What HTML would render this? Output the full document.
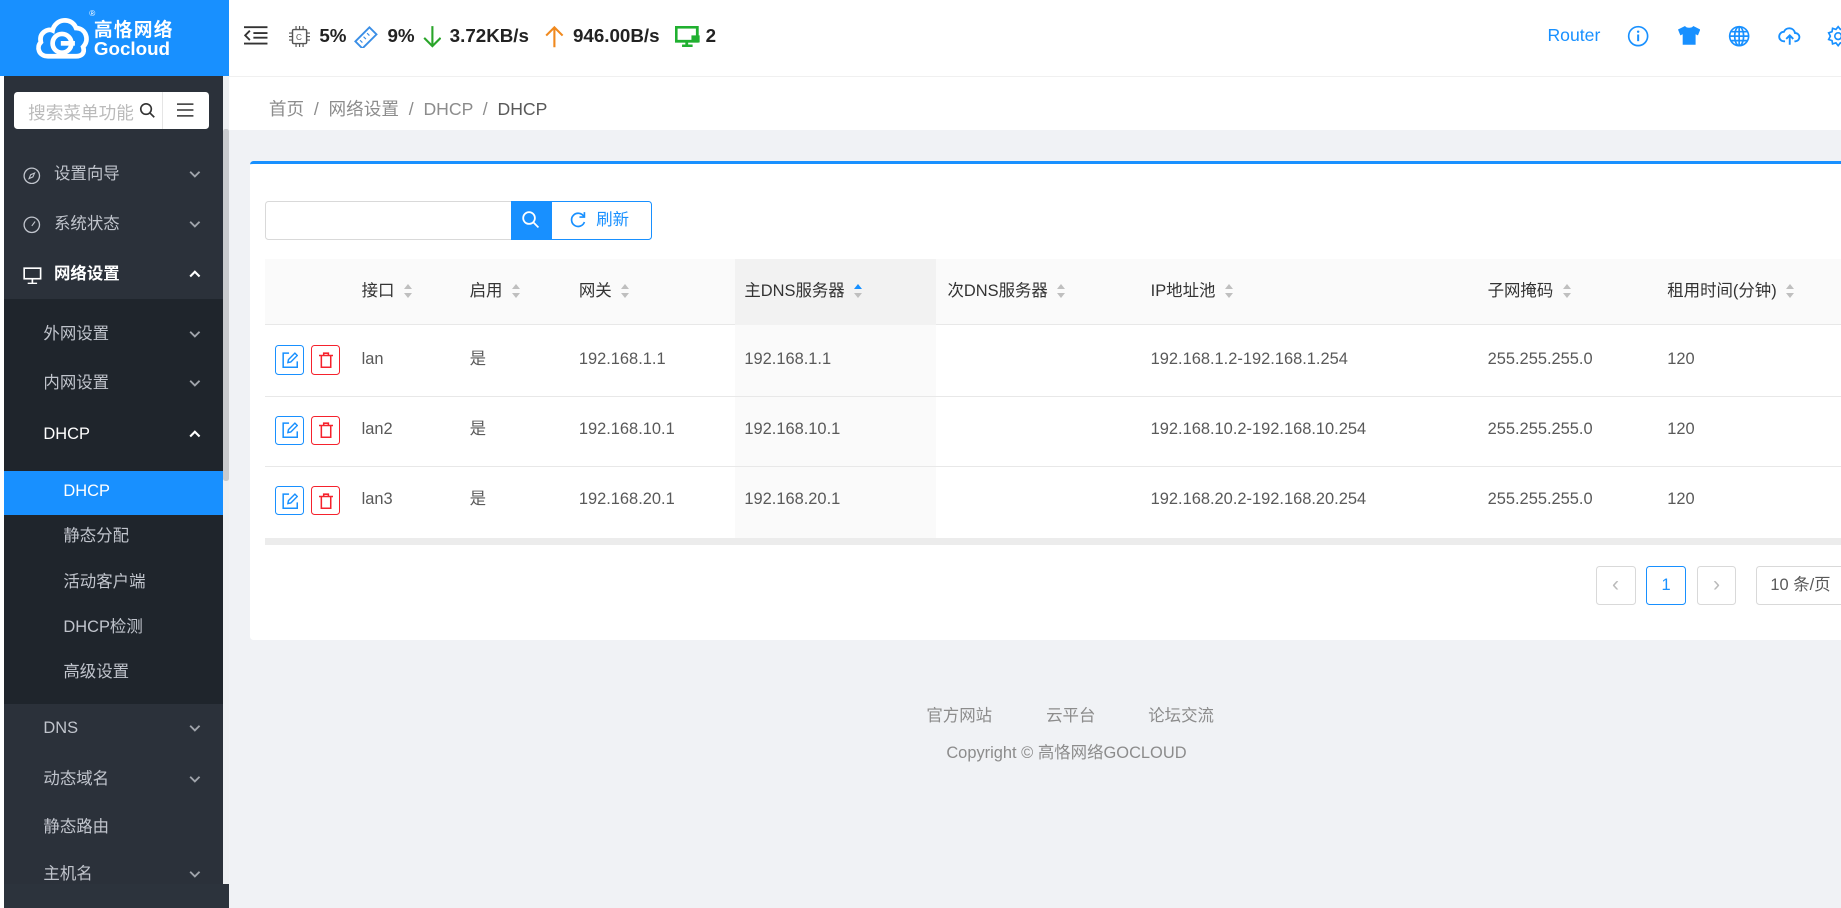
<!DOCTYPE html>
<html><head><meta charset="utf-8">
<style>
html{zoom:1.17411}
*{box-sizing:border-box;margin:0;padding:0}
body{width:1568px;height:773px;overflow:hidden;background:#f0f2f5;font-family:"Liberation Sans","Noto Sans CJK SC",sans-serif;font-size:14px;color:#595959;position:relative}
.abs{position:absolute;white-space:nowrap}
.hdr{left:0;top:0;width:1568px;height:65px;background:#fff;box-shadow:0 1px 3px rgba(0,0,0,.06)}
.logo{left:0;top:0;width:195px;height:65px;background:#1890ff}
.side{left:3px;top:65px;width:187px;height:708px;background:#2b313a}
.sb{left:190px;top:65px;width:5px;height:708px;background:#eef0f2}
.mi{position:absolute;left:0;width:187px;height:42px;line-height:42px;font-size:14px;color:#c0c4cc;white-space:nowrap}
.mi .ch{position:absolute;right:19px;top:17px;width:10px;height:7px}
.sub{left:3px;top:255px;width:187px;height:345px;background:#1f252c}
.card{left:213px;top:137px;width:1360px;height:408px;background:#fff;border-top:3px solid #1890ff;border-radius:3px}
.th{position:absolute;top:0;height:56px;line-height:56px;color:#333;font-size:14px;white-space:nowrap}
.srt{display:inline-block;vertical-align:middle;margin-left:8px;width:8px;height:14px;position:relative;top:-1px}
.srt:before,.srt:after{content:"";position:absolute;left:0;border-left:4px solid transparent;border-right:4px solid transparent}
.srt:before{top:1px;border-bottom:5px solid #bfbfbf}
.srt:after{bottom:1px;border-top:5px solid #bfbfbf}
.srt.up:before{border-bottom-color:#1890ff}
.td{position:absolute;top:0;height:20px;line-height:20px;font-size:14px;color:#595959;white-space:nowrap}
.btn{position:absolute;width:25px;height:25px;border-radius:3px;border:1px solid}
.pg{position:absolute;top:482px;width:34px;height:33px;border:1px solid #d9d9d9;border-radius:3px;text-align:center;line-height:31px;color:#bbb;background:#fff;white-space:nowrap}
</style></head><body>
<svg width="0" height="0" style="position:absolute"><defs>
<symbol id="dn" viewBox="0 0 10 7"><path d="M1 1.5l4 4 4-4" fill="none" stroke="#a0a4ab" stroke-width="1.6"/></symbol>
<symbol id="up" viewBox="0 0 10 7"><path d="M1 5.5l4-4 4 4" fill="none" stroke="#fff" stroke-width="1.8"/></symbol>
</defs></svg>
<div class="abs hdr"></div>
<div class="abs logo">
<svg class="abs" style="left:30px;top:12px" width="48" height="40" viewBox="0 0 46 40"><path d="M10 36 C2 36 0 28 4 24 C2 16 10 12 14 14 C16 4 30 2 34 12 C42 12 46 22 40 28 C42 34 38 36 34 36 Z" fill="none" stroke="#fff" stroke-width="4"/><circle cx="22" cy="25" r="8" fill="none" stroke="#fff" stroke-width="4"/><rect x="21" y="23" width="12" height="4" fill="#fff"/></svg>
<div class="abs" style="left:80px;top:13px;color:#fff;font-weight:bold;font-size:16px;letter-spacing:1px">高恪网络</div>
<div class="abs" style="left:80px;top:32px;color:#fff;font-weight:bold;font-size:16px">Gocloud</div>
<div class="abs" style="left:76px;top:8px;color:#fff;font-size:7px">®</div>
</div>
<svg class="abs" style="left:208px;top:22px" width="20" height="16" viewBox="0 0 20 16"><path d="M0 1h20M8 6h12M8 10h12M0 15h20M5 4L1 8l4 4" stroke="#333" stroke-width="1.6" fill="none"/></svg>
<svg class="abs" style="left:246px;top:22px" width="18" height="18" viewBox="0 0 18 18"><rect x="3" y="3" width="12" height="12" rx="1" fill="none" stroke="#555" stroke-width="1.2"/><path d="M6 0v3M9 0v3M12 0v3M6 15v3M9 15v3M12 15v3M0 6h3M0 9h3M0 12h3M15 6h3M15 9h3M15 12h3" stroke="#555"/><text x="6" y="12" font-size="7" fill="#555" font-family="Liberation Sans">C</text></svg>
<div class="abs" style="left:272px;top:21px;font-weight:bold;font-size:16px;color:#222">5%</div>
<svg class="abs" style="left:301px;top:21px" width="22" height="20" viewBox="0 0 22 20"><path d="M2 14L14 2l6 6L8 20z" fill="none" stroke="#3a8ee6" stroke-width="1.6"/><path d="M6 13l2 2M9 10l2 2M12 7l2 2" stroke="#3a8ee6"/></svg>
<div class="abs" style="left:330px;top:21px;font-weight:bold;font-size:16px;color:#222">9%</div>
<svg class="abs" style="left:360px;top:21px" width="16" height="20" viewBox="0 0 16 20"><path d="M8 1v17M1 11l7 7 7-7" stroke="#2aa52a" stroke-width="1.8" fill="none"/></svg>
<div class="abs" style="left:383px;top:21px;font-weight:bold;font-size:16px;color:#222">3.72KB/s</div>
<svg class="abs" style="left:464px;top:21px" width="16" height="20" viewBox="0 0 16 20"><path d="M8 19V2M1 9l7-7 7 7" stroke="#f0891e" stroke-width="1.8" fill="none"/></svg>
<div class="abs" style="left:488px;top:21px;font-weight:bold;font-size:16px;color:#222">946.00B/s</div>
<svg class="abs" style="left:575px;top:22px" width="22" height="18" viewBox="0 0 22 18"><rect x="1" y="1" width="18" height="12" fill="none" stroke="#20b030" stroke-width="2.4"/><path d="M6 17h9M10 13v4" stroke="#20b030" stroke-width="2.4"/><rect x="14" y="8" width="7" height="6" fill="#20b030"/></svg>
<div class="abs" style="left:601px;top:21px;font-weight:bold;font-size:16px;color:#222">2</div>
<div class="abs" style="left:1318px;top:21px;color:#1890ff;font-size:15px">Router</div>
<svg class="abs" style="left:1386px;top:21px" width="19" height="19" viewBox="0 0 20 20"><circle cx="10" cy="10" r="8.5" fill="none" stroke="#1890ff" stroke-width="1.5"/><path d="M10 8.5v6" stroke="#1890ff" stroke-width="1.8"/><circle cx="10" cy="6" r="1.1" fill="#1890ff"/></svg>
<svg class="abs" style="left:1429px;top:22px" width="19" height="16" viewBox="0 0 19 16"><path d="M6 0L0 3l2 5 2-1v9h11V7l2 1 2-5-6-3c-1 2-6 2-7 0z" fill="#1890ff"/></svg>
<svg class="abs" style="left:1472px;top:21px" width="19" height="19" viewBox="0 0 20 20"><g fill="none" stroke="#1890ff" stroke-width="1.5"><circle cx="10" cy="10" r="8.5"/><ellipse cx="10" cy="10" rx="4" ry="8.5"/><path d="M1.5 10h17M3 6h14M3 14h14M10 1.5v17"/></g></svg>
<svg class="abs" style="left:1514px;top:22px" width="20" height="17" viewBox="0 0 20 17"><path d="M6 13H5a4 4 0 010-8 5 5 0 019.5 1A3.5 3.5 0 0115 13h-1" fill="none" stroke="#1890ff" stroke-width="1.6"/><path d="M10 16V8M7 11l3-3 3 3" fill="none" stroke="#1890ff" stroke-width="1.6"/></svg>
<svg class="abs" style="left:1556px;top:21px" width="19" height="19" viewBox="0 0 20 20"><circle cx="10" cy="10" r="3" fill="none" stroke="#1890ff" stroke-width="1.5"/><path d="M10 1.5l2 2.5 3-1 .5 3 3 1-1.5 3 1.5 3-3 1-.5 3-3-1-2 2.5-2-2.5-3 1-.5-3-3-1 1.5-3-1.5-3 3-1 .5-3 3 1z" fill="none" stroke="#1890ff" stroke-width="1.5"/></svg>
<div class="abs" style="left:195px;top:65px;width:1373px;height:46px;background:#fff;border-top:1px solid #f0f0f0"></div>
<div class="abs" style="left:229px;top:82px;font-size:15px;color:#8c8c8c">首页 &nbsp;/&nbsp; 网络设置 &nbsp;/&nbsp; DHCP &nbsp;/&nbsp; <span style="color:#595959">DHCP</span></div>
<div class="abs" style="left:0;top:65px;width:3px;height:708px;background:#fff"></div>
<div class="abs side"></div>
<div class="abs sb"><div style="position:absolute;left:0;top:45px;width:5px;height:300px;background:#c9cbce;border-radius:2px"></div></div>
<div class="abs" style="left:12px;top:78px;width:166px;height:32px;background:#fff;border-radius:3px">
<span class="abs" style="left:12px;top:7px;color:#bbb;font-size:15px">搜索菜单功能</span>
<svg class="abs" style="left:106px;top:9px" width="14" height="14" viewBox="0 0 14 14"><circle cx="6" cy="6" r="4.5" fill="none" stroke="#333" stroke-width="1.4"/><path d="M9.5 9.5L13 13" stroke="#333" stroke-width="1.4"/></svg>
<div class="abs" style="left:126px;top:0;width:1px;height:32px;background:#e5e5e5"></div>
<svg class="abs" style="left:139px;top:10px" width="14" height="12" viewBox="0 0 14 12"><path d="M0 1h14M0 6h14M0 11h14" stroke="#333" stroke-width="1.3"/></svg>
</div>
<div class="abs sub"></div>
<div class="abs" style="left:3px;top:401px;width:187px;height:38px;background:#1890ff"></div>
<div class="abs" style="left:3px;top:753px;width:192px;height:20px;background:#2c333c"></div>
<div class="abs" style="left:3px;top:0">
<div class="mi" style="top:128px"><svg class="abs" style="left:17px;top:14px" width="15" height="15" viewBox="0 0 16 16"><circle cx="8" cy="8" r="7" fill="none" stroke="#c0c4cc" stroke-width="1.2"/><path d="M10.5 5.5L9 9 5.5 10.5 7 7z" fill="none" stroke="#c0c4cc"/></svg><span style="margin-left:43px">设置向导</span><svg class="ch"><use href="#dn"/></svg></div>
<div class="mi" style="top:170px"><svg class="abs" style="left:17px;top:14px" width="15" height="15" viewBox="0 0 16 16"><circle cx="8" cy="8" r="7" fill="none" stroke="#c0c4cc" stroke-width="1.2"/><path d="M8 9l3-4" stroke="#c0c4cc"/></svg><span style="margin-left:43px">系统状态</span><svg class="ch"><use href="#dn"/></svg></div>
<div class="mi" style="top:213px;color:#fff;font-weight:bold"><svg class="abs" style="left:17px;top:14px" width="16" height="15" viewBox="0 0 16 15"><rect x="1" y="1" width="14" height="9" fill="none" stroke="#fff" stroke-width="1.4"/><path d="M8 10v4M4 14h8" stroke="#fff" stroke-width="1.4"/></svg><span style="margin-left:43px">网络设置</span><svg class="ch"><use href="#up"/></svg></div>
<div class="mi" style="top:264px"><span style="margin-left:34px">外网设置</span><svg class="ch"><use href="#dn"/></svg></div>
<div class="mi" style="top:306px"><span style="margin-left:34px">内网设置</span><svg class="ch"><use href="#dn"/></svg></div>
<div class="mi" style="top:349px;color:#fff"><span style="margin-left:34px">DHCP</span><svg class="ch"><use href="#up"/></svg></div>
<div class="mi" style="top:398px;color:#fff"><span style="margin-left:51px">DHCP</span></div>
<div class="mi" style="top:436px"><span style="margin-left:51px">静态分配</span></div>
<div class="mi" style="top:475px"><span style="margin-left:51px">活动客户端</span></div>
<div class="mi" style="top:514px"><span style="margin-left:51px">DHCP检测</span></div>
<div class="mi" style="top:552px"><span style="margin-left:51px">高级设置</span></div>
<div class="mi" style="top:600px"><span style="margin-left:34px">DNS</span><svg class="ch"><use href="#dn"/></svg></div>
<div class="mi" style="top:643px"><span style="margin-left:34px">动态域名</span><svg class="ch"><use href="#dn"/></svg></div>
<div class="mi" style="top:684px"><span style="margin-left:34px">静态路由</span></div>
<div class="mi" style="top:724px"><span style="margin-left:34px">主机名</span><svg class="ch"><use href="#dn"/></svg></div>
</div>
<div class="abs card"></div>
<div class="abs" style="left:226px;top:171px;width:210px;height:33px;border:1px solid #d9d9d9;border-radius:3px 0 0 3px;background:#fff"></div>
<div class="abs" style="left:435px;top:171px;width:34px;height:33px;background:#1890ff"><svg class="abs" style="left:10px;top:9px" width="15" height="15" viewBox="0 0 15 15"><circle cx="6" cy="6" r="5" fill="none" stroke="#fff" stroke-width="1.5"/><path d="M9.5 9.5L14 14" stroke="#fff" stroke-width="1.5"/></svg></div>
<div class="abs" style="left:469px;top:171px;width:86px;height:33px;border:1px solid #1890ff;border-radius:0 3px 3px 0;background:#fff;color:#1890ff;font-size:14px;line-height:31px;padding-left:38px">刷新</div>
<svg class="abs" style="left:485px;top:180px" width="15" height="15" viewBox="0 0 16 16"><path d="M13.5 5A6 6 0 1014 10" fill="none" stroke="#1890ff" stroke-width="1.5"/><path d="M14 1v4.5H9.5" fill="none" stroke="#1890ff" stroke-width="1.5"/></svg>
<div class="abs" style="left:226px;top:221px;width:1342px;height:56px;background:#fafafa;border-bottom:1px solid #e8e8e8"></div>
<div class="abs" style="left:626px;top:221px;width:171px;height:56px;background:#f2f2f2"></div>
<div class="abs" style="left:626px;top:277px;width:171px;height:181px;background:#fafafa"></div>
<div class="abs" style="left:226px;top:337px;width:1342px;height:1px;background:#e8e8e8"></div>
<div class="abs" style="left:226px;top:397px;width:1342px;height:1px;background:#e8e8e8"></div>
<div class="abs" style="left:226px;top:458px;width:1342px;height:6px;background:#ececec"></div>
<div class="abs" style="left:0;top:221px;width:1568px;height:56px">
<div class="th" style="left:308px">接口<i class="srt"></i></div>
<div class="th" style="left:400px">启用<i class="srt"></i></div>
<div class="th" style="left:493px">网关<i class="srt"></i></div>
<div class="th" style="left:634px">主DNS服务器<i class="srt up"></i></div>
<div class="th" style="left:807px">次DNS服务器<i class="srt"></i></div>
<div class="th" style="left:980px">IP地址池<i class="srt"></i></div>
<div class="th" style="left:1267px">子网掩码<i class="srt"></i></div>
<div class="th" style="left:1420px">租用时间(分钟)<i class="srt"></i></div>
</div>
<div class="abs" style="left:0;top:296px;width:1568px;height:20px">
<div class="btn" style="left:234px;top:-2px;border-color:#1890ff"><svg style="position:absolute;left:5px;top:5px" width="14" height="14" viewBox="0 0 14 14"><path d="M6 1H1v12h12V8" fill="none" stroke="#1890ff" stroke-width="1.3"/><path d="M5 9l.5-2.5L11 1l2 2-5.5 5.5z" fill="none" stroke="#1890ff" stroke-width="1.2"/></svg></div>
<div class="btn" style="left:265px;top:-2px;border-color:#f5222d"><svg style="position:absolute;left:6px;top:5px" width="12" height="14" viewBox="0 0 12 14"><path d="M0 3h12M4 3V1h4v2M2 3v10h8V3" fill="none" stroke="#f5222d" stroke-width="1.3"/></svg></div>
<div class="td" style="left:308px">lan</div><div class="td" style="left:400px">是</div><div class="td" style="left:493px">192.168.1.1</div><div class="td" style="left:634px">192.168.1.1</div><div class="td" style="left:980px">192.168.1.2-192.168.1.254</div><div class="td" style="left:1267px">255.255.255.0</div><div class="td" style="left:1420px">120</div>
</div>
<div class="abs" style="left:0;top:356px;width:1568px;height:20px">
<div class="btn" style="left:234px;top:-2px;border-color:#1890ff"><svg style="position:absolute;left:5px;top:5px" width="14" height="14" viewBox="0 0 14 14"><path d="M6 1H1v12h12V8" fill="none" stroke="#1890ff" stroke-width="1.3"/><path d="M5 9l.5-2.5L11 1l2 2-5.5 5.5z" fill="none" stroke="#1890ff" stroke-width="1.2"/></svg></div>
<div class="btn" style="left:265px;top:-2px;border-color:#f5222d"><svg style="position:absolute;left:6px;top:5px" width="12" height="14" viewBox="0 0 12 14"><path d="M0 3h12M4 3V1h4v2M2 3v10h8V3" fill="none" stroke="#f5222d" stroke-width="1.3"/></svg></div>
<div class="td" style="left:308px">lan2</div><div class="td" style="left:400px">是</div><div class="td" style="left:493px">192.168.10.1</div><div class="td" style="left:634px">192.168.10.1</div><div class="td" style="left:980px">192.168.10.2-192.168.10.254</div><div class="td" style="left:1267px">255.255.255.0</div><div class="td" style="left:1420px">120</div>
</div>
<div class="abs" style="left:0;top:416px;width:1568px;height:20px">
<div class="btn" style="left:234px;top:-2px;border-color:#1890ff"><svg style="position:absolute;left:5px;top:5px" width="14" height="14" viewBox="0 0 14 14"><path d="M6 1H1v12h12V8" fill="none" stroke="#1890ff" stroke-width="1.3"/><path d="M5 9l.5-2.5L11 1l2 2-5.5 5.5z" fill="none" stroke="#1890ff" stroke-width="1.2"/></svg></div>
<div class="btn" style="left:265px;top:-2px;border-color:#f5222d"><svg style="position:absolute;left:6px;top:5px" width="12" height="14" viewBox="0 0 12 14"><path d="M0 3h12M4 3V1h4v2M2 3v10h8V3" fill="none" stroke="#f5222d" stroke-width="1.3"/></svg></div>
<div class="td" style="left:308px">lan3</div><div class="td" style="left:400px">是</div><div class="td" style="left:493px">192.168.20.1</div><div class="td" style="left:634px">192.168.20.1</div><div class="td" style="left:980px">192.168.20.2-192.168.20.254</div><div class="td" style="left:1267px">255.255.255.0</div><div class="td" style="left:1420px">120</div>
</div>
<div class="pg" style="left:1359px;font-size:18px">‹</div>
<div class="pg" style="left:1402px;border-color:#1890ff;color:#1890ff">1</div>
<div class="pg" style="left:1445px;font-size:18px">›</div>
<div class="pg" style="left:1496px;width:90px;color:#595959;text-align:left;padding-left:11px">10 条/页</div>
<div class="abs" style="left:789px;top:598px;color:#8c8c8c;font-size:14px">官方网站</div>
<div class="abs" style="left:891px;top:598px;color:#8c8c8c;font-size:14px">云平台</div>
<div class="abs" style="left:978px;top:598px;color:#8c8c8c;font-size:14px">论坛交流</div>
<div class="abs" style="left:806px;top:629px;color:#8c8c8c;font-size:14px">Copyright © 高恪网络GOCLOUD</div>
</body></html>
